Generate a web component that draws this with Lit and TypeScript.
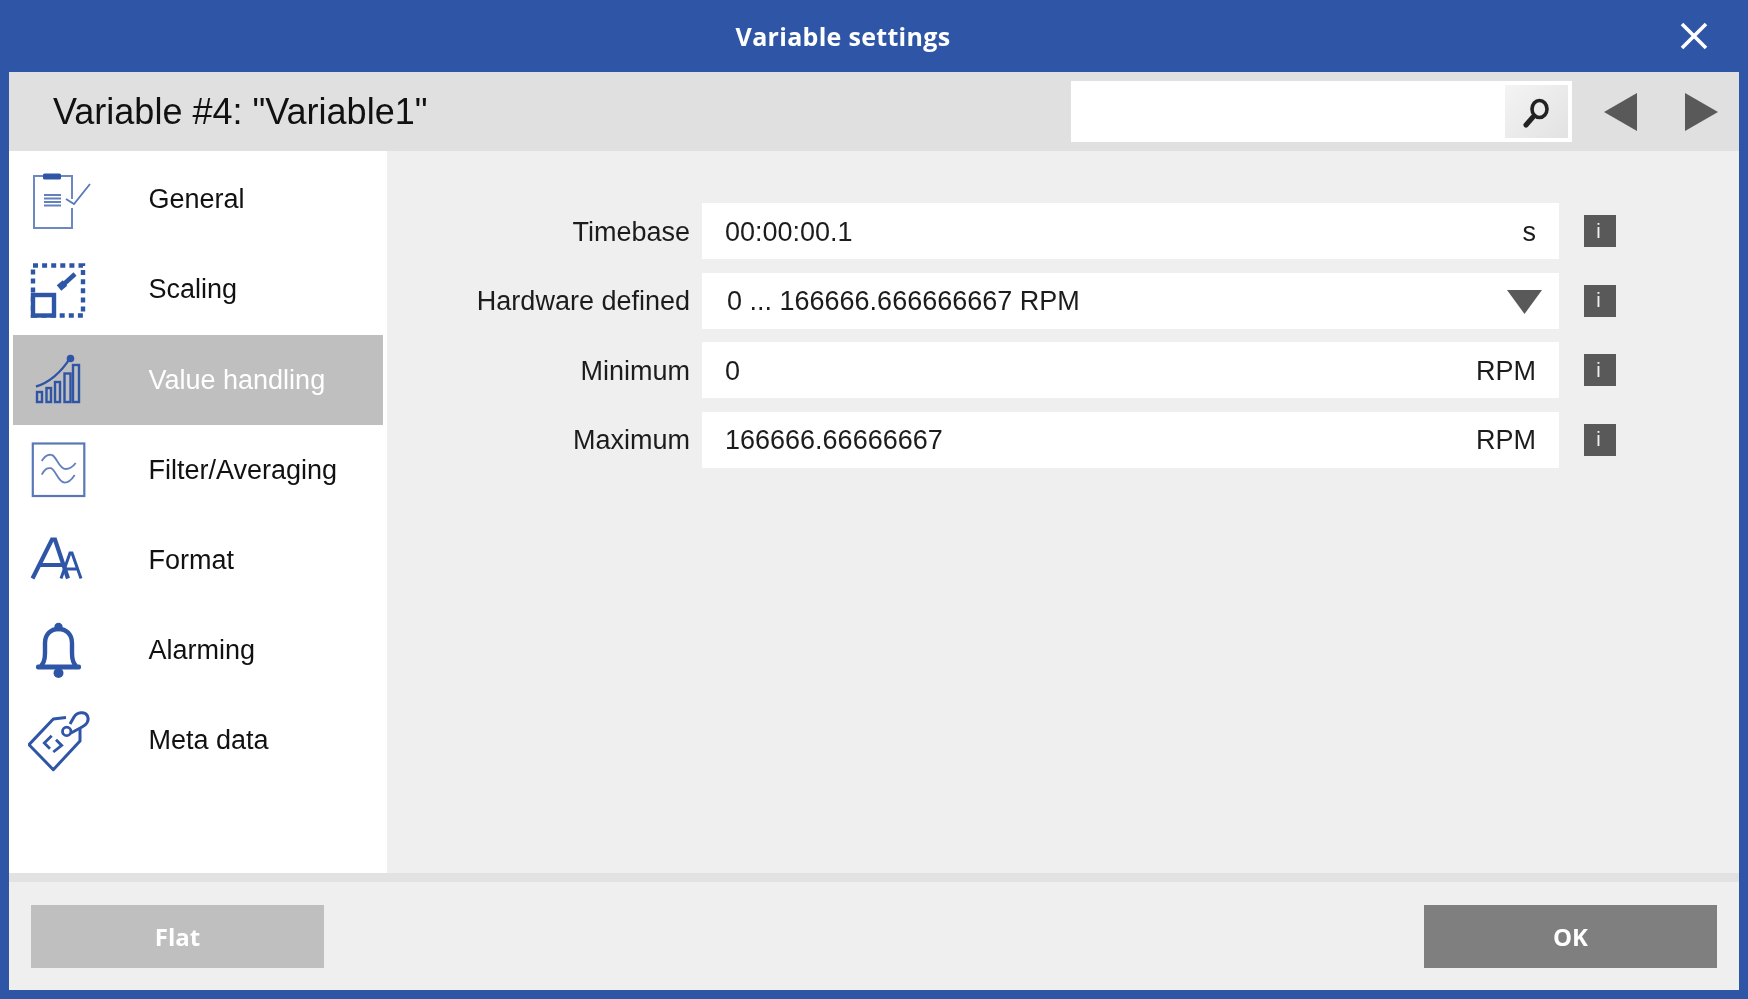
import { LitElement, html, css, svg } from "lit";
import { customElement } from "lit/decorators.js";

const BLUE = "#2f56a6";
const icons = {
  general: svg`<path d="M44 31V8H6v52h38V40" fill="none" stroke="${BLUE}" stroke-width="2" opacity=".7"/>
      <rect x="15" y="5.500" width="18" height="6" rx="1.500" fill="${BLUE}"/>
      <path d="M16 27h17M16 30.500h17M16 34h17M16 37.500h17" stroke="${BLUE}" stroke-width="1.800" fill="none" opacity=".75"/>
      <path d="M38 31l8 5 16-20" stroke="${BLUE}" stroke-width="1.800" fill="none" opacity=".8"/>`,
  scaling: svg`<rect x="5" y="7.500" width="50" height="50" fill="none" stroke="${BLUE}" stroke-width="4.400" stroke-dasharray="5 4.100"/>
      <rect x="5" y="37" width="21" height="20.500" fill="#fff" stroke="${BLUE}" stroke-width="4.400"/>
      <path d="M31 30l6-5" stroke="${BLUE}" stroke-width="7" fill="none"/>
      <path d="M36 26l11-10" stroke="${BLUE}" stroke-width="4.500" fill="none"/>`,
  value: svg`<g fill="none" stroke="${BLUE}" stroke-width="2.400">
      <rect x="9" y="44" width="5" height="10"/><rect x="18.500" y="40" width="4.500" height="14"/>
      <rect x="27" y="34" width="5" height="20"/><rect x="36.500" y="25.500" width="6" height="28.500"/>
      <rect x="45" y="17" width="6" height="37"/><path d="M8 38.500C20 35 33 25 42 10"/></g>
      <circle cx="42.500" cy="10.500" r="3.800" fill="${BLUE}"/>`,
  filter: svg`<rect x="4.800" y="5.500" width="51.500" height="52.500" fill="none" stroke="${BLUE}" stroke-width="2.200" opacity=".8"/>
      <path d="M13.700 23c3-5 6-7 10-6 5 1 7 14 14 14 4 0 7-2 10-6M13.700 36.600c3-5 5-7 9-6.500 5 1 7 14 14 14.500 4 0 7-3 10-7.600" fill="none" stroke="${BLUE}" stroke-width="1.800" opacity=".75"/>`,
  format: svg`<path d="M4.500 50.500L24 11.500h3L40 50.500M10 37h25" fill="none" stroke="${BLUE}" stroke-width="4.200"/>
      <path d="M33 50.500L42 25h2L53 50.500M36 41h14" fill="none" stroke="${BLUE}" stroke-width="3"/>`,
  alarm: svg`<path d="M13 47C16 44 17 40 17 34V24C17 15 23 10 30.500 10S44 15 44 24V34C44 40 45 44 48 47" fill="none" stroke="${BLUE}" stroke-width="4.400"/>
      <rect x="8" y="45.500" width="45" height="5" rx="2" fill="${BLUE}"/>
      <circle cx="30.500" cy="8" r="4.200" fill="${BLUE}"/><circle cx="30.500" cy="54" r="5" fill="${BLUE}"/>`,
  meta: svg`<path d="M38 8.500L25.300 10L1 35.700L25.300 60.700L52 32L52 20" fill="none" stroke="${BLUE}" stroke-width="3" stroke-linejoin="round"/>
      <circle cx="38.700" cy="22.400" r="4.200" fill="none" stroke="${BLUE}" stroke-width="2.800"/>
      <path d="M42 15L46 8C49 3 57 2 59.500 7C61.500 12 58 16 54 18L43 24" fill="none" stroke="${BLUE}" stroke-width="3"/>
      <path d="M23.700 26.700L16.300 34L22 39.700M28 30.700L33.700 36.400L25.300 43" fill="none" stroke="${BLUE}" stroke-width="2.800"/>`,
};

const nav = [
  ["General", icons.general], ["Scaling", icons.scaling], ["Value handling", icons.value],
  ["Filter/Averaging", icons.filter], ["Format", icons.format], ["Alarming", icons.alarm], ["Meta data", icons.meta],
] as const;

const rows = [
  { label: "Timebase", value: "00:00:00.1", unit: "s" },
  { label: "Hardware defined", value: "0 ... 166666.666666667 RPM", select: true },
  { label: "Minimum", value: "0", unit: "RPM" },
  { label: "Maximum", value: "166666.66666667", unit: "RPM" },
];

@customElement("app-root")
export class AppRoot extends LitElement {
  static styles = css`
    :host { display: block; width: 1748px; height: 999px; background: #2f56a6; font-family: "Liberation Sans", Arial, sans-serif; color: #111; overflow: hidden; }
    .titlebar { height: 72px; display: grid; grid-template-columns: 1fr auto 1fr; align-items: center; filter: blur(.5px); }
    .title { font: 700 25px "Open Sans", sans-serif; letter-spacing: .3px; color: #fff; padding-right: 62px; }
    .close { justify-self: end; margin-right: 40px; width: 28px; height: 28px; display: block; }
    .frame { margin: 0 9px; height: 918px; display: flex; flex-direction: column; background: #efefef; filter: blur(.5px); }
    .head { height: 79px; flex: none; background: #e0e0e0; display: flex; align-items: center; padding-left: 44px; padding-right: 21px; }
    .head h1 { margin: 0; flex: 1; font-weight: 400; font-size: 36px; color: #111; }
    .search { width: 501px; height: 61px; background: #fff; box-sizing: border-box; padding: 4px; display: flex; justify-content: flex-end; }
    .sbtn { width: 63px; height: 53px; background: linear-gradient(135deg, #f4f4f4, #e2e2e2); display: flex; align-items: center; justify-content: center; }
    .arrow { display: block; width: 33px; height: 38px; }
    .arrow.l { margin-left: 32px; }
    .arrow.r { margin-left: 48px; }
    .body { flex: 1; display: flex; min-height: 0; }
    .side { width: 378px; flex: none; background: #fff; padding: 3.600px 4px 0; box-sizing: border-box; }
    .item { height: 90.200px; display: flex; align-items: center; font-size: 27px; color: #111; }
    .item.sel { background: #bfbfbf; color: #fff; }
    .item svg { width: 64px; height: 64px; margin-left: 15px; margin-right: 56.500px; flex: none; }
    .content { flex: 1; min-width: 0; padding-top: 52px; display: flex; flex-direction: column; gap: 13.670px; }
    .row { display: flex; align-items: center; height: 56px; }
    .lbl { width: 315px; flex: none; text-align: right; padding: 2px 12px 0 0; box-sizing: border-box; font-size: 27px; color: #1c1c1c; }
    .field { width: 857px; flex: none; height: 56px; background: #fff; display: flex; align-items: center; justify-content: space-between; padding: 2px 23px 0; box-sizing: border-box; font-size: 27px; color: #1c1c1c; }
    .field.sel { padding-left: 25px; padding-right: 17px; }
    .info { margin-left: 25px; width: 32px; height: 32px; padding-right: 3px; box-sizing: border-box; background: #595959; color: #f0f0f0; display: flex; align-items: center; justify-content: center; font-size: 20px; }
    .divider { height: 9px; flex: none; background: #e2e2e2; }
    .foot { height: 108px; flex: none; display: flex; justify-content: space-between; align-items: center; padding: 0 22px; box-sizing: border-box; }
    .btn { width: 293px; height: 63px; display: flex; align-items: center; justify-content: center; font: 700 24px "Open Sans", sans-serif; color: #fff; }
    .btn.flat { background: #bfbfbf; }
    .btn.ok { background: #7f7f7f; }
  `;

  render() {
    return html`
      <div class="titlebar">
        <span></span>
        <div class="title">Variable settings</div>
        <svg class="close" viewBox="0 0 28 28"><path d="M2 2l24 24M26 2L2 26" stroke="#fff" stroke-width="3.600" fill="none"/></svg>
      </div>
      <div class="frame">
        <div class="head">
          <h1>Variable #4: "Variable1"</h1>
          <div class="search"><div class="sbtn">
            <svg width="32" height="32" viewBox="0 0 32 32"><ellipse cx="18.500" cy="13" rx="7.500" ry="8.500" fill="none" stroke="#222" stroke-width="3.600"/><path d="M12 21l-7 8" stroke="#222" stroke-width="5" stroke-linecap="round"/></svg>
          </div></div>
          <svg class="arrow l" viewBox="0 0 33 38"><path d="M0 19L33 0v38z" fill="#595959"/></svg>
          <svg class="arrow r" viewBox="0 0 33 38"><path d="M33 19L0 0v38z" fill="#595959"/></svg>
        </div>
        <div class="body">
          <div class="side">
            ${nav.map(([t, ic]) => html`<div class="item ${t === "Value handling" ? "sel" : ""}"><svg viewBox="0 0 64 64">${ic}</svg><span>${t}</span></div>`)}
          </div>
          <div class="content">
            ${rows.map((r) => html`<div class="row">
              <div class="lbl">${r.label}</div>
              <div class="field ${r.select ? "sel" : ""}">
                <span>${r.value}</span>
                ${r.select
                  ? html`<svg width="35" height="24" viewBox="0 0 35 24"><path d="M0 0h35L17.500 24z" fill="#595959"/></svg>`
                  : html`<span>${r.unit}</span>`}
              </div>
              <div class="info">i</div>
            </div>`)}
          </div>
        </div>
        <div class="divider"></div>
        <div class="foot"><div class="btn flat">Flat</div><div class="btn ok">OK</div></div>
      </div>`;
  }
}
